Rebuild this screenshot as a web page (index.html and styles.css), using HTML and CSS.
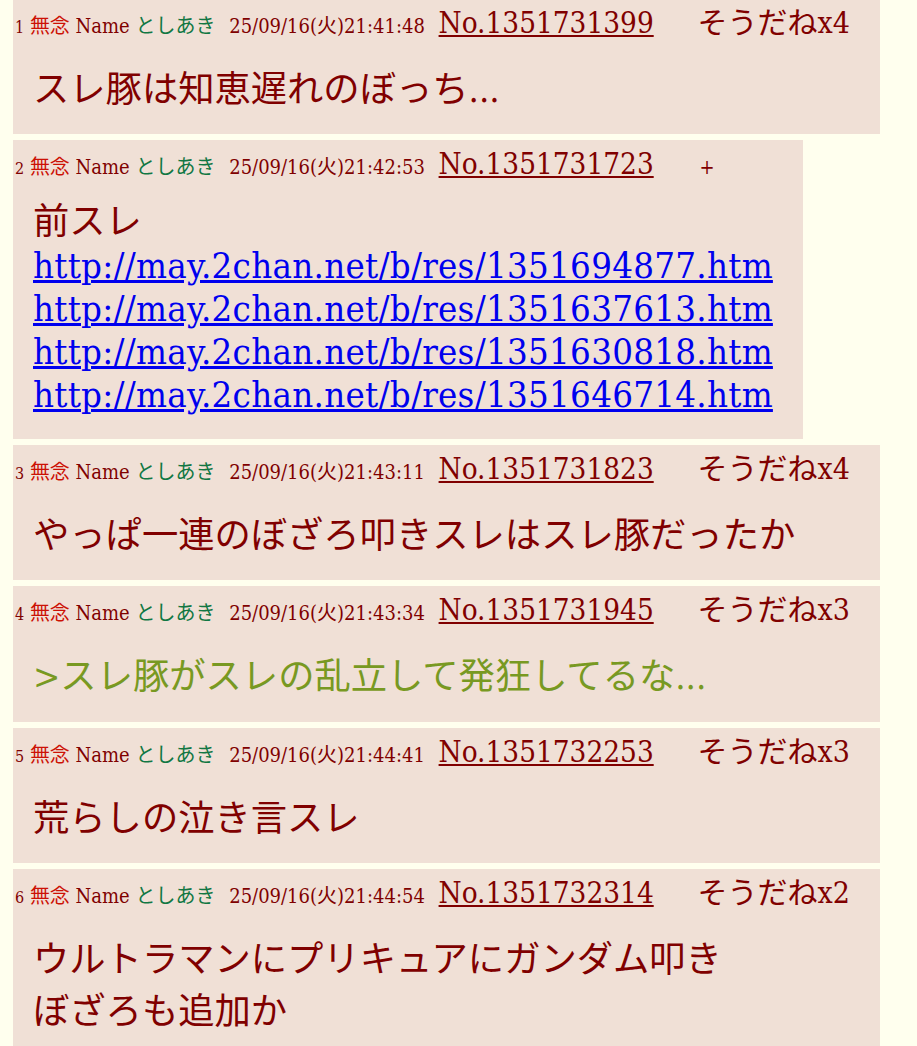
FILE: index.html
```html
<!DOCTYPE html>
<html lang="ja">
<head>
  <meta charset="UTF-8">
  <meta name="viewport" content="width=device-width, initial-scale=1.0">
  <title>スレ</title>
  <link rel="stylesheet" href="styles.css">
</head>
<body>
  <div class="thread">
    <div class="post">
      <div class="head">
        <span class="rno">1</span> <span class="sub">無念</span> <span class="nam">Name</span> <span class="name">としあき</span>
        <span class="date">25/09/16(火)21:41:48</span>
        <a class="no" href="#">No.1351731399</a>
        <a class="sod" href="#">そうだねx4</a>
      </div>
      <blockquote>スレ豚は知恵遅れのぼっち...</blockquote>
    </div>

    <div class="post">
      <div class="head">
        <span class="rno">2</span> <span class="sub">無念</span> <span class="nam">Name</span> <span class="name">としあき</span>
        <span class="date">25/09/16(火)21:42:53</span>
        <a class="no" href="#">No.1351731723</a>
        <a class="plus" href="#">+</a>
      </div>
      <blockquote>前スレ<br>
        <a href="#">http://may.2chan.net/b/res/1351694877.htm</a><br>
        <a href="#">http://may.2chan.net/b/res/1351637613.htm</a><br>
        <a href="#">http://may.2chan.net/b/res/1351630818.htm</a><br>
        <a href="#">http://may.2chan.net/b/res/1351646714.htm</a>
      </blockquote>
    </div>

    <div class="post">
      <div class="head">
        <span class="rno">3</span> <span class="sub">無念</span> <span class="nam">Name</span> <span class="name">としあき</span>
        <span class="date">25/09/16(火)21:43:11</span>
        <a class="no" href="#">No.1351731823</a>
        <a class="sod" href="#">そうだねx4</a>
      </div>
      <blockquote>やっぱ一連のぼざろ叩きスレはスレ豚だったか</blockquote>
    </div>

    <div class="post">
      <div class="head">
        <span class="rno">4</span> <span class="sub">無念</span> <span class="nam">Name</span> <span class="name">としあき</span>
        <span class="date">25/09/16(火)21:43:34</span>
        <a class="no" href="#">No.1351731945</a>
        <a class="sod" href="#">そうだねx3</a>
      </div>
      <blockquote><span class="quote">&gt;スレ豚がスレの乱立して発狂してるな...</span></blockquote>
    </div>

    <div class="post">
      <div class="head">
        <span class="rno">5</span> <span class="sub">無念</span> <span class="nam">Name</span> <span class="name">としあき</span>
        <span class="date">25/09/16(火)21:44:41</span>
        <a class="no" href="#">No.1351732253</a>
        <a class="sod" href="#">そうだねx3</a>
      </div>
      <blockquote>荒らしの泣き言スレ</blockquote>
    </div>

    <div class="post">
      <div class="head">
        <span class="rno">6</span> <span class="sub">無念</span> <span class="nam">Name</span> <span class="name">としあき</span>
        <span class="date">25/09/16(火)21:44:54</span>
        <a class="no" href="#">No.1351732314</a>
        <a class="sod" href="#">そうだねx2</a>
      </div>
      <blockquote>ウルトラマンにプリキュアにガンダム叩き<br>ぼざろも追加か</blockquote>
    </div>
  </div>
</body>
</html>
```

FILE: styles.css
```css
* {
  box-sizing: border-box;
}
body {
  margin: 0;
  padding: 0 0 0 13px;
  background-color: #ffffee;
  color: #800000;
  font-family: "DejaVu Serif Condensed", "DejaVu Serif", "Noto Sans CJK JP", serif;
}
/* page is scrolled a little past the first post's top */
.thread {
  margin-top: -1.5px;
}
.post {
  width: fit-content;
  background-color: #f0e0d6;
  padding: 9px 30px 22.4px 2px;
  margin-bottom: 6px;
}
.head {
  font-size: 20px;
  line-height: 30px;
  white-space: nowrap;
}
.rno {
  font-size: 16px;
}
.sub {
  color: #cc1105;
}
.name {
  color: #117743;
  margin-right: 8px;
}
.date {
  margin-right: 8px;
}
.no {
  color: #800000;
  font-size: 29.4px;
}
.sod {
  display: inline-block;
  color: #800000;
  font-size: 30px;
  text-decoration: none;
  margin-left: 38px;
  padding-bottom: 13.5px;
}
.plus {
  color: #800000;
  text-decoration: none;
  margin-left: 40px;
}
blockquote {
  font-size: 36.3px;
  margin: 8.5px 0 0 18px;
  white-space: nowrap;
}
blockquote a {
  color: #0000ee;
  letter-spacing: 0.27px;
}
.quote {
  color: #789922;
}
```
